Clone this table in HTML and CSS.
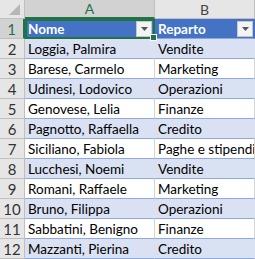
FILE: index.html
```html
<!DOCTYPE html>
<html>
<head>
<meta charset="utf-8">
<link rel="stylesheet" href="styles.css">
</head>
<body>
<div class="sheet">
  <div class="corner"><svg width="24" height="18" viewBox="0 0 24 18"><polygon points="20,4 20,15 9,15" fill="#b7b7b7"/></svg></div>
  <div class="colhead sel">A</div>
  <div class="colhead">B</div>

  <div class="rowhead sel">1</div>
  <div class="cell hdr first">Nome<span class="dd"><svg width="7" height="4" viewBox="0 0 7 4"><polygon points="0,0 7,0 3.5,4" fill="#555"/></svg></span></div>
  <div class="cell hdr">Reparto<span class="dd"><svg width="7" height="4" viewBox="0 0 7 4"><polygon points="0,0 7,0 3.5,4" fill="#555"/></svg></span></div>

  <div class="rowhead">2</div><div class="cell b">Loggia, Palmira</div><div class="cell b">Vendite</div>
  <div class="rowhead">3</div><div class="cell">Barese, Carmelo</div><div class="cell">Marketing</div>
  <div class="rowhead">4</div><div class="cell b">Udinesi, Lodovico</div><div class="cell b">Operazioni</div>
  <div class="rowhead">5</div><div class="cell">Genovese, Lelia</div><div class="cell">Finanze</div>
  <div class="rowhead">6</div><div class="cell b">Pagnotto, Raffaella</div><div class="cell b">Credito</div>
  <div class="rowhead">7</div><div class="cell">Siciliano, Fabiola</div><div class="cell">Paghe e stipendi</div>
  <div class="rowhead">8</div><div class="cell b">Lucchesi, Noemi</div><div class="cell b">Vendite</div>
  <div class="rowhead">9</div><div class="cell">Romani, Raffaele</div><div class="cell">Marketing</div>
  <div class="rowhead">10</div><div class="cell b">Bruno, Filippa</div><div class="cell b">Operazioni</div>
  <div class="rowhead">11</div><div class="cell">Sabbatini, Benigno</div><div class="cell">Finanze</div>
  <div class="rowhead">12</div><div class="cell b">Mazzanti, Pierina</div><div class="cell b last">Credito</div>
</div>
</body>
</html>
```
FILE: styles.css
```css
html, body { margin: 0; padding: 0; background: #fff; }
body { width: 255px; height: 259px; overflow: hidden; }
.sheet {
  display: grid;
  grid-template-columns: 25px 130px 100px;
  grid-template-rows: 19px repeat(12, 20px);
  font-family: "Lato", "Liberation Sans", sans-serif;
  font-size: 13.5px;
  color: #000;
}
.corner {
  background: #e6e6e6;
  border-right: 1px solid #bfbfbf;
  border-bottom: 1px solid #bfbfbf;
  box-sizing: border-box;
  display: flex; align-items: flex-end; justify-content: flex-end;
}
.corner svg { display: block; }
.colhead {
  background: #e6e6e6;
  color: #444;
  border-right: 1px solid #bfbfbf;
  border-bottom: 1px solid #bfbfbf;
  box-sizing: border-box;
  display: flex; align-items: center; justify-content: center;
  font-size: 14px;
}
.colhead.sel {
  background: #d2d2d2;
  color: #217346;
  border-bottom: 2px solid #217346;
}
.rowhead {
  background: #e6e6e6;
  color: #333;
  border-right: 1px solid #bfbfbf;
  border-bottom: 1px solid #bfbfbf;
  box-sizing: border-box;
  display: flex; align-items: center; justify-content: center;
  font-size: 15px;
}
.rowhead.sel {
  background: #d2d2d2;
  color: #217346;
  border-right: 2px solid #217346;
}
.cell {
  box-sizing: border-box;
  border-right: 1px solid #d4d4d4;
  border-bottom: 1px solid #8ea9db;
  padding-left: 3px;
  display: flex; align-items: center;
  white-space: nowrap;
  overflow: hidden;
  position: relative;
}
.cell.b { background: #d9e1f2; border-right-color: #d9e1f2; }
.cell.hdr {
  background: #4472c4;
  color: #fff;
  font-weight: bold;
  border-right-color: #4472c4;
  justify-content: space-between;
  padding-right: 1px;
}
.cell.hdr.first {
  border: 2px solid #217346;
  padding-left: 1px;
  overflow: visible;
}
.dd {
  width: 16px; height: 16px;
  background: #f4f4f4;
  border: 1px solid #c6c6c6;
  box-sizing: border-box;
  display: flex; align-items: center; justify-content: center;
}
.first::after {
  content: "";
  position: absolute;
  right: -4px; bottom: -4px;
  width: 5px; height: 5px;
  background: #217346;
  border: 1px solid #fff;
  z-index: 2;
}
```
